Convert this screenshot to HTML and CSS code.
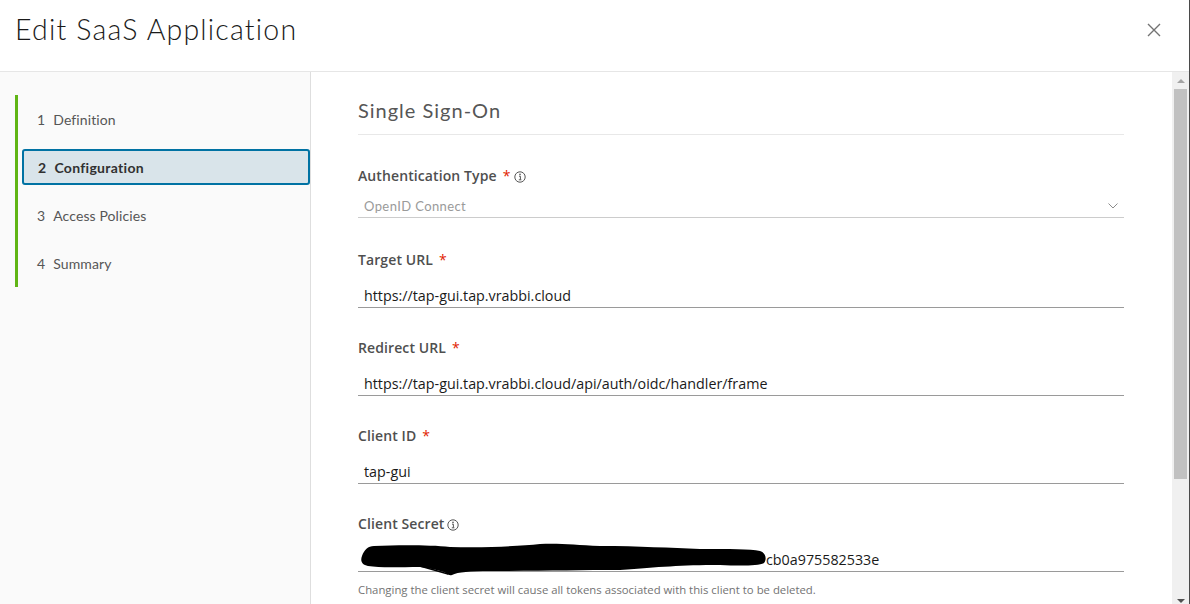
FILE: index.html
```html
<!DOCTYPE html>
<html>
<head>
<meta charset="utf-8">
<title>Edit SaaS Application</title>
<link rel="stylesheet" href="styles.css">
</head>
<body>
<div class="app">
  <header class="header">
    <h1 class="title">Edit SaaS Application</h1>
    <button class="close" aria-label="Close">
      <svg width="14" height="14" viewBox="0 0 14 14"><path d="M1 1 L13 13 M13 1 L1 13" stroke="#737373" stroke-width="1.4" fill="none"/></svg>
    </button>
  </header>
  <div class="main">
    <nav class="sidebar">
      <ul class="steps">
        <li class="step"><div class="step-box"><span class="num">1</span>Definition</div></li>
        <li class="step active"><div class="step-box"><span class="num">2</span>Configuration</div></li>
        <li class="step"><div class="step-box"><span class="num">3</span>Access Policies</div></li>
        <li class="step"><div class="step-box"><span class="num">4</span>Summary</div></li>
      </ul>
    </nav>
    <section class="content">
      <h2 class="section-title">Single Sign-On</h2>
      <div class="field field-select">
        <div class="label">Authentication Type <span class="req">*</span><svg class="info" width="12" height="12" viewBox="0 0 12 12"><circle cx="6" cy="6" r="5.2" stroke="#565656" stroke-width="1" fill="none"/><circle cx="6" cy="3.4" r="0.8" fill="#565656"/><path d="M5 5.2 H6.4 V8.6 M4.8 8.8 H7.4" stroke="#565656" stroke-width="1" fill="none"/></svg></div>
        <div class="select"><span>OpenID Connect</span><svg class="chev" width="10" height="6" viewBox="0 0 10 6"><path d="M0.5 0.5 L5 5 L9.5 0.5" stroke="#8c8c8c" stroke-width="1" fill="none"/></svg></div>
      </div>
      <div class="field">
        <div class="label">Target URL <span class="req">*</span></div>
        <div class="input">https://tap-gui.tap.vrabbi.cloud</div>
      </div>
      <div class="field">
        <div class="label">Redirect URL <span class="req">*</span></div>
        <div class="input">https://tap-gui.tap.vrabbi.cloud/api/auth/oidc/handler/frame</div>
      </div>
      <div class="field">
        <div class="label">Client ID <span class="req">*</span></div>
        <div class="input">tap-gui</div>
      </div>
      <div class="field">
        <div class="label">Client Secret<svg class="info info-tight" width="12" height="12" viewBox="0 0 12 12"><circle cx="6" cy="6" r="5.2" stroke="#565656" stroke-width="1" fill="none"/><circle cx="6" cy="3.4" r="0.8" fill="#565656"/><path d="M5 5.2 H6.4 V8.6 M4.8 8.8 H7.4" stroke="#565656" stroke-width="1" fill="none"/></svg></div>
        <div class="input secret">
          <span class="hidden-part"></span>cb0a975582533e
          <svg class="redact" width="410" height="36" viewBox="0 0 410 36"><path d="M2 14 C4 8 8 4 14 4 C40 3 70 3 90 5 C130 6 160 4 180 2 C200 1 215 3 240 4 C280 4 310 6 340 7 C370 7 390 7 400 9 C406 11 407 17 404 21 C398 24 380 24 360 23 C320 23 300 25 260 28 C220 28 180 29 130 29 C110 29 98 30 92 33 C88 34 86 31 84 30 C76 28 70 26 60 25 C40 25 20 26 8 24 C2 23 0 19 2 14 Z" fill="#000"/><path d="M60 24 L88 32" stroke="#000" stroke-width="1.5" fill="none"/></svg>
        </div>
        <div class="helper">Changing the client secret will cause all tokens associated with this client to be deleted.</div>
      </div>
    </section>
    <div class="scrollbar">
      <div class="arrow-up"></div>
      <div class="thumb"></div>
      <div class="track-fill"></div>
      <div class="arrow-down"></div>
    </div>
  </div>
</div>
</body>
</html>
```
FILE: styles.css
```css
* { box-sizing: border-box; }
html, body { margin: 0; padding: 0; }
body {
  width: 1190px;
  height: 604px;
  overflow: hidden;
  background: #fff;
  font-family: Lato, "Liberation Sans", sans-serif;
  color: #565656;
}
.app {
  width: 1190px;
  height: 604px;
  border-right: 1px solid #4a4a4a;
  display: flex;
  flex-direction: column;
}
.header {
  height: 72px;
  flex: none;
  border-bottom: 1px solid #e6e6e6;
  display: flex;
  align-items: center;
  justify-content: space-between;
  padding: 0 28px 0 15px;
}
.title {
  margin: 0;
  font-family: Lato, sans-serif;
  font-weight: 300;
  font-size: 28.5px;
  color: #1a1a1a;
  letter-spacing: 1.2px;
  line-height: 1;
  padding-bottom: 12px;
}
.close {
  border: 0;
  background: none;
  padding: 0;
  width: 14px;
  height: 14px;
  display: flex;
  margin-bottom: 12px;
}
.main {
  flex: 1;
  display: flex;
  min-height: 0;
}
.sidebar {
  width: 311px;
  flex: none;
  background: #fafafa;
  border-right: 1px solid #dedede;
  padding-top: 23px;
}
.steps {
  list-style: none;
  margin: 0 0 0 15px;
  padding: 0 0 0 4px;
  border-left: 3px solid #60b515;
}
.step {
  height: 48px;
  padding: 6px 0;
}
.step-box {
  height: 36px;
  width: 288px;
  border: 2px solid transparent;
  border-radius: 3px;
  padding-left: 13px;
  display: flex;
  align-items: center;
  font-size: 14px;
  color: #565656;
  letter-spacing: 0.1px;
}
.num { margin-right: 8px; }
.step.active .step-box {
  background: #d9e4ea;
  border-color: #0072a3;
  color: #313131;
  font-weight: 700;
  padding-left: 14px;
  letter-spacing: 0.3px;
}
.content {
  flex: 1;
  padding: 24px 48px 0 47px;
  min-width: 0;
}
.section-title {
  margin: 0;
  font-weight: 400;
  font-size: 20px;
  line-height: 28px;
  color: #565656;
  padding-bottom: 10px;
  border-bottom: 1px solid #e8e8e8;
  letter-spacing: 1px;
}
.field { margin-top: 28px; }
.field-select { margin-top: 29px; }
.field-select + .field { margin-top: 30px; }
.label {
  height: 24px;
  line-height: 24px;
  font-family: "Open Sans", sans-serif;
  font-size: 14px;
  font-weight: 600;
  color: #4f4f4f;
  display: flex;
  align-items: center;
  letter-spacing: 0.1px;
}
.req { color: #e12200; margin-left: 6px; font-weight: 400; }
.info { margin-left: 4px; margin-top: 1px; }
.info-tight { margin-left: 3px; }
.select {
  margin-top: 6px;
  height: 24px;
  border-bottom: 1px solid #cccccc;
  display: flex;
  align-items: center;
  justify-content: space-between;
  padding: 1px 6px 0 6px;
  font-size: 13px;
  letter-spacing: 0.4px;
  color: #9a9a9a;
}
.input {
  margin-top: 12px;
  height: 24px;
  line-height: 23px;
  border-bottom: 1px solid #9a9a9a;
  padding-left: 6px;
  font-family: "Open Sans", sans-serif;
  font-size: 14.3px;
  color: #1a1a1a;
  white-space: nowrap;
}
.secret {
  position: relative;
}
.hidden-part {
  display: inline-block;
  width: 402px;
}
.redact {
  position: absolute;
  left: 2px;
  top: -6px;
}
.helper {
  margin-top: 8px;
  font-family: "Open Sans", sans-serif;
  font-size: 11.35px;
  color: #737373;
  line-height: 20px;
}
.scrollbar {
  width: 17px;
  flex: none;
  background: #f0f0f0;
  display: flex;
  flex-direction: column;
  align-items: center;
}
.arrow-up {
  margin-top: 7px;
  width: 0; height: 0;
  border-left: 4px solid transparent;
  border-right: 4px solid transparent;
  border-bottom: 4px solid #a3a3a3;
}
.thumb {
  margin-top: 6px;
  width: 13px;
  height: 390px;
  background: #c1c1c1;
}
.track-fill { flex: 1; }
.arrow-down {
  width: 0; height: 0;
  border-left: 4px solid transparent;
  border-right: 4px solid transparent;
  border-top: 4px solid #505050;
  margin-bottom: 1px;
}
```
